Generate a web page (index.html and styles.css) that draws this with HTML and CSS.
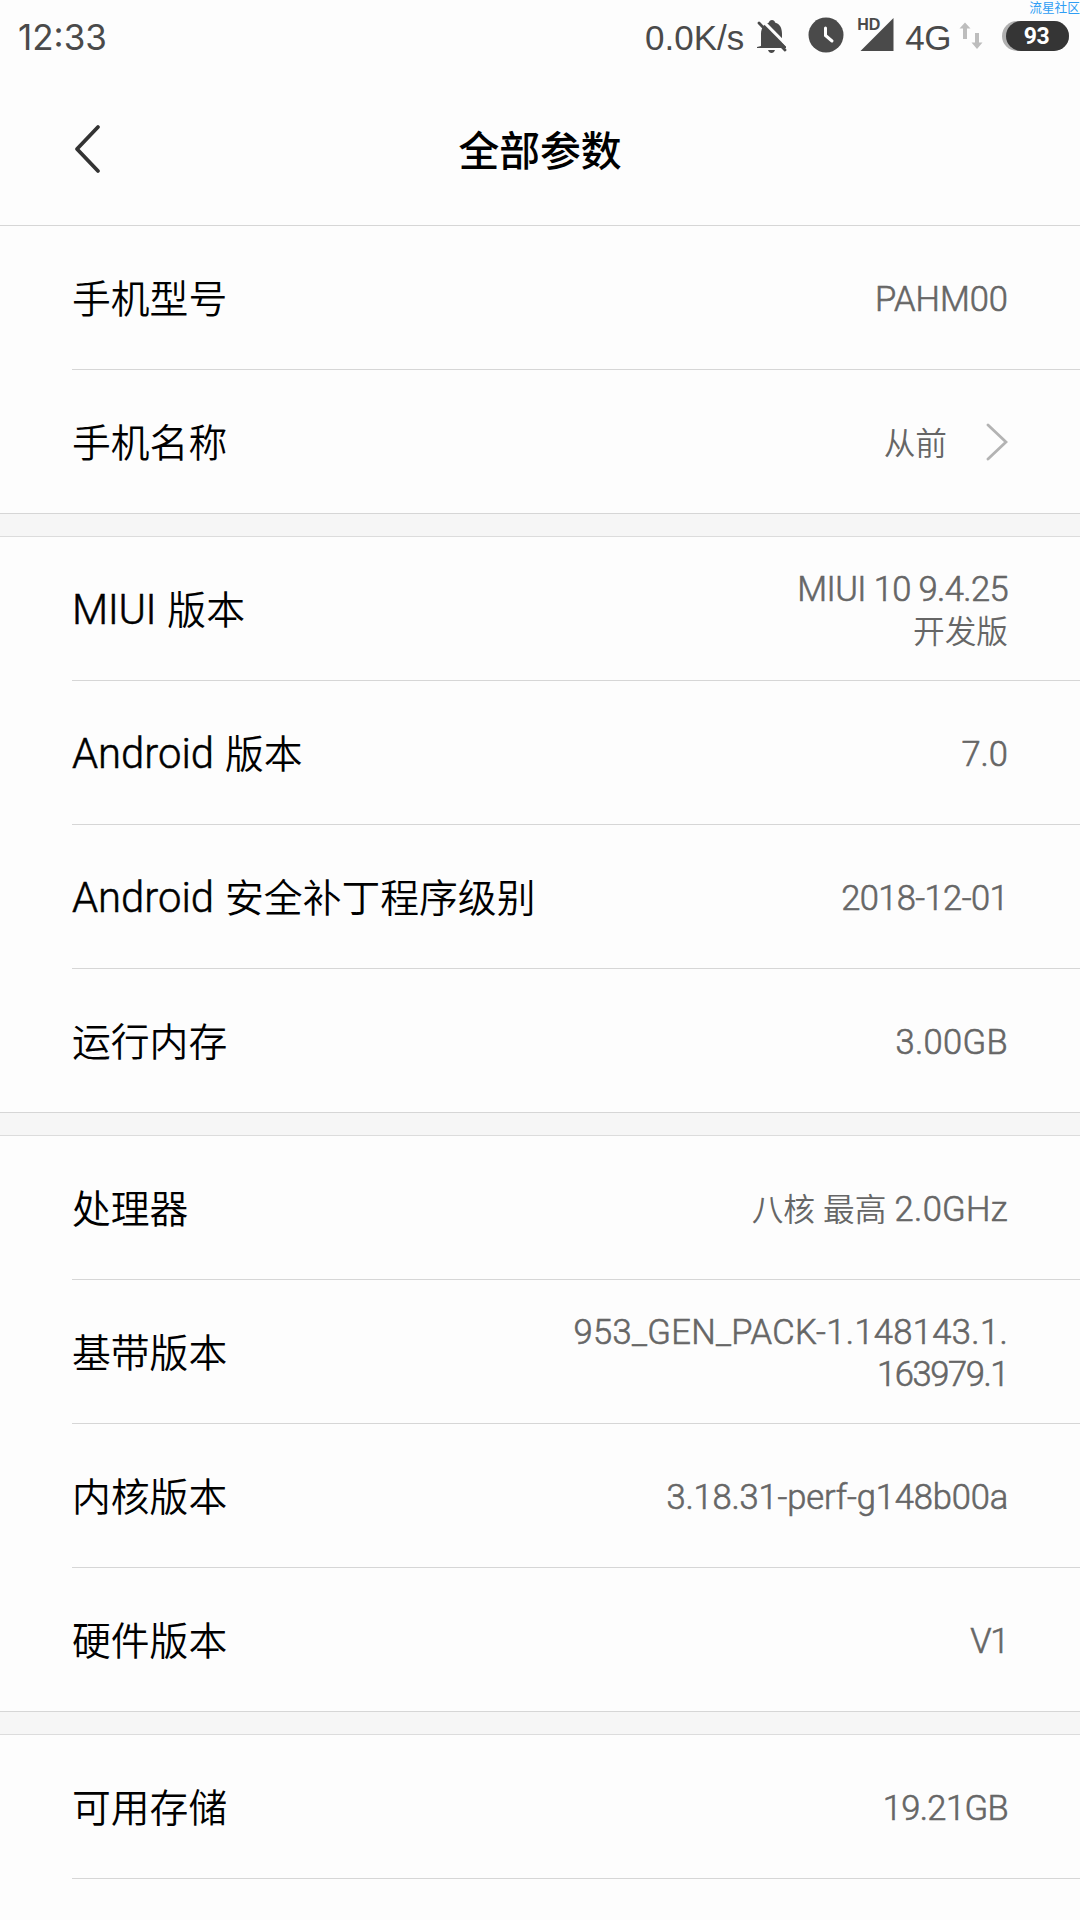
FILE: index.html
```html
<!DOCTYPE html>
<html lang="zh-CN">
<head>
<meta charset="utf-8">
<title>全部参数</title>
<link rel="stylesheet" href="styles.css">
</head>
<body>

<div class="watermark">流星社区</div>

<div class="statusbar">
  <span class="time">12:33</span>
  <div class="status-icons">
    <span class="speed">0.0K/s</span>
    <svg class="bell" width="30" height="36" viewBox="0 0 30 36">
      <path fill="#4a4a4a" d="M4 28V16C4 10 7 6 12 4.500C12 1 18 1 18 4.500C23 6 25 10 25 16V24L29 28V30H0V29ZM11 32H18Q17 35 14.500 35T11 32Z"/>
      <path stroke="#fdfdfd" stroke-width="3" d="M4 1L32 29.500"/>
      <path stroke="#4a4a4a" stroke-width="2.800" stroke-linecap="round" d="M2 5L28 32"/>
    </svg>
    <svg class="clock" width="36" height="36" viewBox="0 0 36 36">
      <circle cx="18" cy="18" r="17.500" fill="#4a4a4a"/>
      <path fill="none" stroke="#fff" stroke-width="3" stroke-linecap="round" d="M17.500 11V18.500L24 24"/>
    </svg>
    <div class="signal">
      <svg width="34" height="34" viewBox="0 0 34 34"><path fill="#4a4a4a" d="M33.500 0V33H0.500Z"/></svg>
      <span class="hd">HD</span>
    </div>
    <span class="network">4G</span>
    <svg class="arrows" width="24" height="28" viewBox="0 0 24 28">
      <path fill="#bdbdbd" d="M6 0.500L11.500 6.500H8V17H4V6.500H0.500ZM16 11H20V20.500H23.500L18 27L12.500 20.500H16Z"/>
    </svg>
    <div class="battery"><span class="level">93</span></div>
  </div>
</div>

<div class="header">
  <svg class="back" width="28" height="50" viewBox="0 0 28 50"><path fill="none" stroke="#333" stroke-width="3.800" stroke-linecap="round" stroke-linejoin="round" d="M25 3L4 25L25 47"/></svg>
  <h1>全部参数</h1>
</div>

<div class="group">
  <div class="row"><div class="label">手机型号</div><div class="value"><span class="en">PAHM00</span></div></div>
  <div class="row"><div class="label">手机名称</div><div class="value">从前</div>
    <svg class="more" width="22" height="38" viewBox="0 0 22 38"><path fill="none" stroke="#b3b3b3" stroke-width="2.800" stroke-linecap="round" d="M2 2L20 19L2 36"/></svg>
  </div>
</div>

<div class="group">
  <div class="row"><div class="label"><span class="en miui">MIUI</span>版本</div><div class="value"><span class="en tight">MIUI 10 9.4.25</span><br>开发版</div></div>
  <div class="row"><div class="label"><span class="en">Android</span>版本</div><div class="value"><span class="en">7.0</span></div></div>
  <div class="row"><div class="label"><span class="en">Android</span>安全补丁程序级别</div><div class="value"><span class="en tight">2018-12-01</span></div></div>
  <div class="row"><div class="label">运行内存</div><div class="value"><span class="en wide">3.00GB</span></div></div>
</div>

<div class="group">
  <div class="row"><div class="label">处理器</div><div class="value cpu">八核 最高 <span class="en wide">2.0GHz</span></div></div>
  <div class="row"><div class="label">基带版本</div><div class="value"><span class="en wide">953_GEN_PACK-1.148143.1.</span><br><span class="en tighter">163979.1</span></div></div>
  <div class="row"><div class="label">内核版本</div><div class="value"><span class="en kernel">3.18.31-perf-g148b00a</span></div></div>
  <div class="row"><div class="label">硬件版本</div><div class="value"><span class="en tighter">V1</span></div></div>
</div>

<div class="group last">
  <div class="row"><div class="label">可用存储</div><div class="value"><span class="en tight">19.21GB</span></div></div>
</div>

</body>
</html>
```

FILE: styles.css
```css
body { margin:0; width:1080px; height:1920px; overflow:hidden; background:#fdfdfd; font-family:"Noto Sans CJK SC", sans-serif; color:#000; }
svg { display:block; flex:none; }

.watermark { position:absolute; right:0; top:-1px; font-size:12.7px; line-height:15px; color:#2f9df4; }

.statusbar { height:72px; display:flex; justify-content:space-between; padding:0 11px 0 18px; box-sizing:border-box; color:#4a4a4a; font-family:"Liberation Sans", sans-serif; }
.time { font-family:Inter, sans-serif; font-size:35px; line-height:75px; }
.status-icons { display:flex; align-items:flex-start; }
.speed { font-size:35px; line-height:75px; margin-right:13px; }
.bell { margin-top:18px; margin-right:21px; }
.clock { margin-top:17px; margin-right:16px; }
.signal { position:relative; margin-top:18px; margin-right:11px; }
.hd { position:absolute; left:-3px; top:0; font-size:16px; line-height:13px; font-weight:bold; background:#fdfdfd; }
.network { font-size:35px; line-height:75px; margin-right:8px; letter-spacing:-0.5px; }
.arrows { margin-top:22px; margin-right:19px; }
.battery { width:67px; height:30px; margin-top:21px; border-radius:15px; background:#b0b0b0; display:flex; justify-content:flex-end; }
.level { width:63px; border-radius:15px; background:#353535; color:#fff; font:bold 23px/32px Roboto, sans-serif; text-align:center; text-indent:-2px; letter-spacing:-0.5px; }

.header { height:153px; display:flex; align-items:center; border-bottom:1px solid #d6d6d6; position:relative; }
.back { margin-left:73px; margin-top:1px; }
.header h1 { position:absolute; left:0; right:0; top:47px; margin:0; text-align:center; font-size:40.8px; line-height:60px; font-weight:500; }

.group { border-bottom:22px solid #f6f6f6; }
.group + .group { border-top:1px solid #dcdcdc; }
.group.last { border-bottom:0; }
.row { height:143px; margin-left:72px; padding-right:72px; display:flex; align-items:center; border-bottom:1px solid #d6d6d6; }
.group .row:last-child { margin-left:0; padding-left:72px; }
.group.last .row { margin-left:72px; padding-left:0; }

.label { flex:1; font-size:38.8px; line-height:56px; font-weight:350; white-space:nowrap; padding-bottom:4px; }
.label .en { font-family:Roboto, sans-serif; font-size:41.8px; font-weight:300; line-height:0; margin-right:11px; -webkit-text-stroke:0.5px #000; }
.label .miui { letter-spacing:-0.4px; }
.value { font-size:31.7px; line-height:42px; font-weight:350; color:#666; text-align:right; white-space:nowrap; padding-bottom:2px; }
.value .en { font-family:Roboto, sans-serif; font-size:34.5px; font-weight:300; line-height:0; -webkit-text-stroke:0.6px #666; }
.value .tight { letter-spacing:-0.6px; }
.value .tighter { letter-spacing:-1.4px; }
.value .wide { letter-spacing:0.35px; }
.value .kernel { letter-spacing:-0.15px; }
.cpu { word-spacing:1px; }
.more { margin-left:39px; }
```
